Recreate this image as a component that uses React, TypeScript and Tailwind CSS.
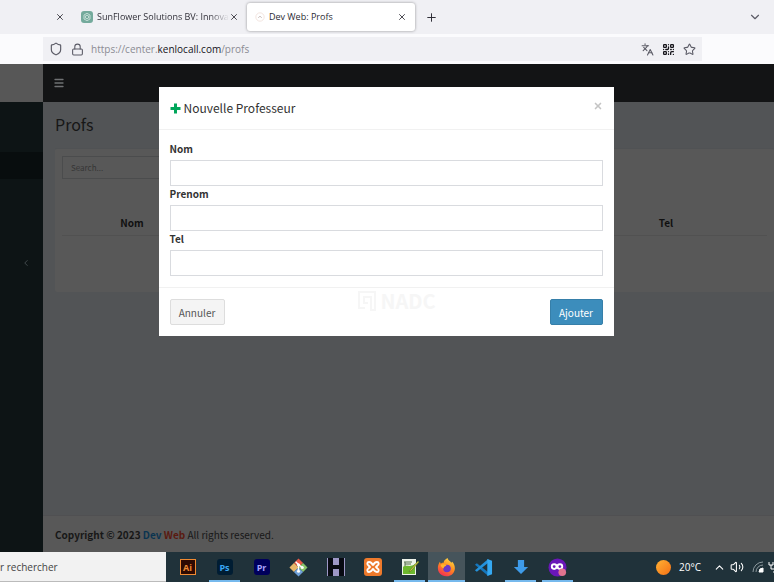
import { useState } from 'react'
import type { ReactNode } from 'react'
import { X, Plus, ChevronDown, ChevronUp, ChevronLeft, Shield, Lock, Languages, Star, Menu, QrCode, Volume2 } from 'lucide-react'

function TabStrip() {
  return (
    <div className="flex h-[34px] shrink-0 items-center bg-[#f0f0f4] text-[#2b2a33]">
      <button aria-label="Fermer l'onglet" className="ml-[55px]">
        <X size={10} strokeWidth={2} />
      </button>
      <div className="ml-4 flex items-center">
        <span className="flex h-3 w-3 shrink-0 items-center justify-center rounded-[3px] bg-[#74aa9c]">
          <svg viewBox="0 0 12 12" className="h-3 w-3" fill="none" stroke="#d5e8e2" strokeWidth="0.8">
            <path d="M6 2.3 9 4v4L6 9.7 3 8V4zM6 4.2 7.6 5v2L6 7.8 4.4 7V5z" />
          </svg>
        </span>
        <span className="ml-1 bg-linear-to-r from-[#2b2a33] from-85% to-transparent bg-clip-text text-[9px] whitespace-nowrap text-transparent">
          SunFlower Solutions BV: Innova
        </span>
        <button aria-label="Fermer l'onglet" className="shrink-0">
          <X size={10} strokeWidth={2} />
        </button>
      </div>
      <div className="ml-2 flex h-[28px] w-[168px] items-center rounded-[3px] bg-white px-2 shadow-[0_0_3px_rgba(0,0,0,0.4)]">
        <svg viewBox="0 0 12 12" className="h-2.5 w-2.5" fill="none" stroke="#f0e0da">
          <circle cx="6" cy="6" r="5" />
          <path d="M4 7l2-2 2 2" stroke="#b9aaa6" />
        </svg>
        <span className="ml-1 flex-1 text-[9px]">Dev Web: Profs</span>
        <button aria-label="Fermer l'onglet">
          <X size={10} strokeWidth={2} />
        </button>
      </div>
      <button aria-label="Nouvel onglet" className="ml-2.5">
        <Plus size={13} strokeWidth={1.8} />
      </button>
      <button aria-label="Lister les onglets" className="mr-3 ml-auto text-[#5b5b66]">
        <ChevronDown size={14} strokeWidth={2} />
      </button>
    </div>
  )
}

function AddressBar() {
  return (
    <div className="flex h-[30px] shrink-0 items-center bg-[#fbfbfd] pr-[72px] pl-[43px]">
      <div className="flex h-6 flex-1 items-center bg-[#f0f0f4] px-1.5 text-[#5b5b66]">
        <Shield size={14} strokeWidth={2} />
        <Lock size={13} strokeWidth={2} className="ml-2" />
        <a href="#profs" className="ml-[7px] flex-1 text-[10px] text-[#8b8b93]">
          https://center.<span className="text-[#15141a]">kenlocall.com</span>/profs
        </a>
        <Languages size={13} strokeWidth={2} />
        <QrCode size={13} strokeWidth={2.4} className="ml-2 text-[#15141a]" />
        <Star size={13} strokeWidth={2} className="ml-2" />
      </div>
    </div>
  )
}

function Sidebar() {
  return (
    <aside className="flex w-[43px] shrink-0 flex-col bg-[#0d1415]">
      <div className="h-[38px] bg-[#575757]" />
      <div className="mt-[50px] h-[27px] bg-[#080d0e]" />
      <button aria-label="Ouvrir le menu" className="mt-[79px] mr-3 self-end text-[#4b5356]">
        <ChevronLeft size={10} strokeWidth={2} />
      </button>
    </aside>
  )
}

function ProfsPage() {
  return (
    <main className="flex min-w-0 flex-1 flex-col bg-[#525456]">
      <header className="flex h-[38px] shrink-0 items-center bg-[#131415] pl-[10px] text-[#6f7173]">
        <button aria-label="Basculer la navigation">
          <Menu size={12} strokeWidth={2.6} />
        </button>
      </header>
      <h1 className="mt-3 ml-3 text-[16px] leading-5 text-[#171717]">Profs</h1>
      <section className="mt-[14px] ml-3 h-[144px] overflow-hidden rounded-[2px] border-t border-[#505254] bg-[#585858] px-[7px] pt-[7px]">
        <input
          type="search"
          aria-label="Search"
          placeholder="Search..."
          className="block h-[23px] w-[180px] border border-[#4b4c4d] px-2 text-[8px] placeholder:text-[#363636]"
        />
        <table className="mt-8 w-full table-fixed text-[10px] leading-[24px] text-[#101010]">
          <thead>
            <tr className="border-b border-[#515151]">
              <th className="w-[140px]">Nom</th>
              <th>Prenom</th>
              <th className="w-[202px]">Tel</th>
            </tr>
          </thead>
        </table>
      </section>
      <footer className="mt-auto flex h-[37px] items-center border-t border-[#505052] bg-[#585858] pl-3 text-[10px] text-[#171717]">
        <p>
          <strong>
            Copyright © 2023 <a href="#dev" className="text-[#0b3450]">Dev</a>{' '}
            <a href="#web" className="text-[#5a1a10]">Web</a>
          </strong>{' '}
          All rights reserved.
        </p>
      </footer>
    </main>
  )
}

function Field({ id, label }: { id: string; label: string }) {
  const [value, setValue] = useState('')
  return (
    <div>
      <label htmlFor={id} className="mb-1 block text-[10px] leading-[15px] font-bold">
        {label}
      </label>
      <input
        id={id}
        value={value}
        onChange={(e) => setValue(e.target.value)}
        className="block h-[26px] w-full border border-[#d9dbdf] bg-white px-2 text-[11px]"
      />
    </div>
  )
}

function ProfModal() {
  return (
    <div className="absolute inset-0 flex items-start justify-center pt-[23px] pr-0.5">
      <div role="dialog" aria-labelledby="modal-title" className="w-[455px] bg-white text-[#333]">
        <div className="flex h-[43px] items-center border-b border-[#f1f1f1] px-[11px]">
          <svg viewBox="0 0 11 11" className="h-[11px] w-[11px]" fill="#00a65a">
            <path d="M4 0.5h3V4h3.500v3H7v3.500H4V7H0.500V4H4z" />
          </svg>
          <h4 id="modal-title" className="ml-[3px] flex-1 text-[12px] leading-5">
            Nouvelle Professeur
          </h4>
          <button aria-label="Fermer" className="mb-1 text-[#c4c4c4]">
            <X size={10} strokeWidth={4} />
          </button>
        </div>
        <form className="p-[11px]">
          <Field id="nom" label="Nom" />
          <Field id="prenom" label="Prenom" />
          <Field id="tel" label="Tel" />
        </form>
        <div className="relative flex justify-between border-t border-[#f1f1f1] p-[11px]">
          <button className="h-[26px] w-[55px] rounded-[2px] border border-[#ddd] bg-[#f4f4f4] text-[10px] text-[#555]">
            Annuler
          </button>
          <div className="absolute top-0.5 left-[198px] flex items-center text-[#f6f6f6]">
            <svg viewBox="0 0 20 22" className="h-[22px] w-5" fill="none" stroke="currentColor" strokeWidth="2">
              <path d="M8 18H2V2h16v18h-4V7H7v6h4" />
            </svg>
            <span className="ml-1 text-[20px] leading-5 font-bold">NADC</span>
          </div>
          <button className="h-[26px] w-[53px] rounded-[2px] border border-[#367fa9] bg-[#3c8dbc] text-[10px] text-white">
            Ajouter
          </button>
        </div>
      </div>
    </div>
  )
}

function AdobeIcon({ label, className }: { label: string; className: string }) {
  return (
    <span className={`flex h-4 w-4 items-center justify-center text-[9px] leading-none font-bold ${className}`}>
      {label}
    </span>
  )
}

function TaskButton({ name, open, active, children }: { name: string; open?: boolean; active?: boolean; children: ReactNode }) {
  return (
    <button
      aria-label={name}
      className={`relative flex h-full w-[37px] shrink-0 items-center justify-center ${active ? 'bg-[#46545b]' : ''}`}
    >
      {children}
      {open && (
        <span className={`absolute bottom-0 h-0.5 bg-[#76b9ed] ${active ? 'inset-x-0' : 'inset-x-[3px]'}`} />
      )}
    </button>
  )
}

function Taskbar() {
  return (
    <div className="flex h-[30px] shrink-0 items-center bg-[#20323a] text-white">
      <input
        aria-label="Rechercher"
        defaultValue="r rechercher"
        className="h-full w-[166px] border-b border-[#bbb] bg-[#f2f2f2] text-[10px] text-[#444]"
      />
      <div className="ml-[3px] flex h-full">
        <TaskButton name="Illustrator">
          <AdobeIcon label="Ai" className="border border-[#f08a32] bg-[#2e0a02] text-[#f08a32]" />
        </TaskButton>
        <TaskButton name="Photoshop" open>
          <AdobeIcon label="Ps" className="rounded-[3px] bg-[#001d33] text-[#3aa6f5]" />
        </TaskButton>
        <TaskButton name="Premiere Pro">
          <AdobeIcon label="Pr" className="rounded-[3px] bg-[#00005b] text-[#a9a4ff]" />
        </TaskButton>
        <TaskButton name="Git">
          <svg viewBox="0 0 20 20" className="h-[19px] w-[19px]">
            <path d="M10 0.500 5.200 5.200 10 10l4.800-4.800z" fill="#ea5a48" />
            <path d="M5.200 5.200 0.500 10l4.700 4.800L10 10z" fill="#e7b76a" />
            <path d="M14.800 5.200 19.500 10l-4.700 4.800L10 10z" fill="#8cc56a" />
            <path d="M5.200 14.800 10 19.500l4.800-4.700L10 10z" fill="#6fa0d8" />
            <path d="M7 4l3 3v7M10 7l4 3" stroke="#fff" strokeWidth="1.5" fill="none" />
            <circle cx="10" cy="7" r="1.6" fill="#fff" />
            <circle cx="10" cy="14" r="1.6" fill="#fff" />
            <circle cx="14" cy="10" r="1.6" fill="#fff" />
          </svg>
        </TaskButton>
        <TaskButton name="HeidiSQL">
          <svg viewBox="0 0 18 18" className="h-[18px] w-[18px]">
            <path d="M0 0h18v18H0z" fill="#9d97c6" />
            <path d="M1 0h5v7h6V0h5v18h-5v-7H6v7H1z" fill="#080a12" />
          </svg>
        </TaskButton>
        <TaskButton name="XAMPP">
          <svg viewBox="0 0 18 18" className="h-[18px] w-[18px]">
            <rect width="18" height="18" rx="3" fill="#ee7a2c" />
            <g fill="none" stroke="#fff" strokeWidth="1.9" strokeLinejoin="round">
              <path d="M9 7.500C8 5 7 4 5 4S2.800 6.500 4.500 7.500L6 9l-1.500 1.500C2.800 11.500 3 14 5 14s3-1 4-3.500" />
              <path d="M9 7.500C10 5 11 4 13 4s2.200 2.500.5 3.500L12 9l1.500 1.500c1.700 1 1.500 3.500-.5 3.500s-3-1-4-3.500" />
            </g>
          </svg>
        </TaskButton>
        <TaskButton name="Notepad++" open>
          <svg viewBox="0 0 18 18" className="h-[18px] w-[18px]">
            <path d="M1 1h14v16H1z" fill="#eef3ea" />
            <path d="M2 9c3-3 7 1 12-3v10H2z" fill="#6db82e" />
            <path d="M3 4h8M4 6h6M4 4v4" stroke="#55704a" />
            <path d="M17 3 9 12l-1 2 2-1 8-9z" fill="#d8c747" stroke="#557725" strokeWidth="0.6" />
          </svg>
        </TaskButton>
        <TaskButton name="Firefox" open active>
          <svg viewBox="0 0 20 20" className="h-[19px] w-[19px]">
            <defs>
              <linearGradient id="fox" x1="0.8" y1="0" x2="0.3" y2="1">
                <stop offset="0" stopColor="#ffe14a" />
                <stop offset="0.5" stopColor="#ff8a1e" />
                <stop offset="1" stopColor="#f52c55" />
              </linearGradient>
            </defs>
            <path d="M11 0c1 3 3 3 4 5l1-1c3 3 4 8 1 12-4 5-12 4-15-1C0 11 1 7 3 4l1 2c1-1 2-1 3-1 0-2 2-4 4-5z" fill="url(#fox)" />
            <circle cx="10.500" cy="11" r="4" fill="#6b38c7" />
            <path d="M4 7c3-1 5 0 6 1-1 1-3 1-3 3-2-1-3-2-3-4z" fill="#ffb52e" />
          </svg>
        </TaskButton>
        <TaskButton name="Visual Studio Code">
          <svg viewBox="0 0 20 20" className="h-[19px] w-[19px]">
            <path d="M1 7l2-1.500L15 15v4z" fill="#1577be" />
            <path d="M1 13l2 1.500L15 5V1z" fill="#2492dc" />
            <path d="M14 1l5 2v14l-5 2z" fill="#35a9f2" />
          </svg>
        </TaskButton>
        <TaskButton name="Téléchargements" open>
          <svg viewBox="0 0 18 18" className="h-4 w-4">
            <path d="M5.500 1h7v8H17l-8 8-8-8h4.500z" fill="#3e9be9" />
          </svg>
        </TaskButton>
        <TaskButton name="Navigateur" open>
          <svg viewBox="0 0 20 20" className="h-[19px] w-[19px]" fill="none">
            <circle cx="10" cy="10" r="9.500" fill="#6a16b8" />
            <circle cx="6.500" cy="9" r="2.500" stroke="#fff" strokeWidth="2" />
            <circle cx="12.500" cy="9" r="2.500" stroke="#fff" strokeWidth="2" />
            <circle cx="15" cy="15" r="4" fill="#e0748e" />
          </svg>
        </TaskButton>
      </div>
      <div className="ml-auto flex shrink-0 items-center">
        <span className="h-[15px] w-[15px] rounded-full bg-linear-to-br from-[#ffb133] to-[#f36f14]" />
        <span className="ml-2 text-[10px]">20°C</span>
        <ChevronUp size={13} strokeWidth={2} className="ml-3" />
        <Volume2 size={14} strokeWidth={1.8} className="ml-1" />
        <svg viewBox="0 0 12 12" className="ml-2 h-3 w-3" fill="none" stroke="#8d999e">
          <path d="M1 11A10 10 0 0 1 11 1M4 11a7 7 0 0 1 7-7" />
          <path d="M7 11a4 4 0 0 1 4-4v4z" fill="#fff" stroke="#fff" />
        </svg>
        <svg viewBox="0 0 6 14" className="ml-1 h-3.5 w-1.5" fill="none" stroke="#fff">
          <path d="M1 2v3h4V2M3 5v4M3 9h3M5 12h1" />
        </svg>
      </div>
    </div>
  )
}

export default function App() {
  return (
    <div className="flex min-h-screen flex-col overflow-hidden font-['Open_Sans',sans-serif]">
      <TabStrip />
      <AddressBar />
      <div className="relative flex flex-1 font-['Noto_Sans_CJK_SC',sans-serif]">
        <Sidebar />
        <ProfsPage />
        <ProfModal />
      </div>
      <Taskbar />
    </div>
  )
}
